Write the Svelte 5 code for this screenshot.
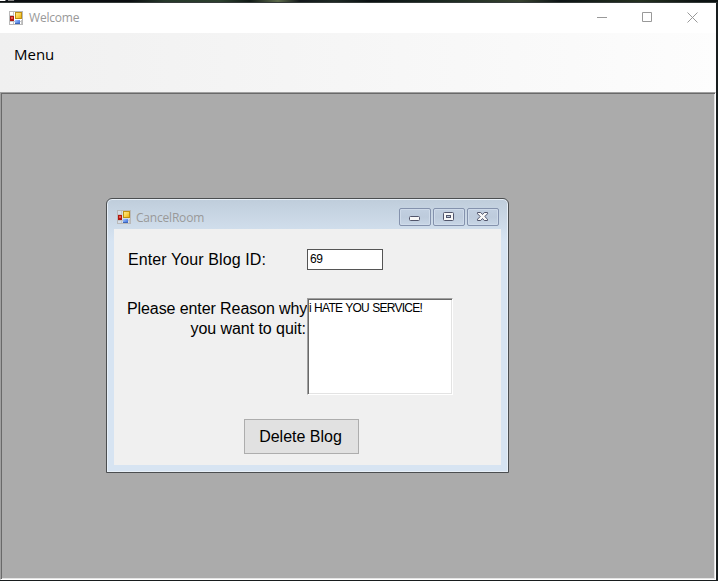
<script>
  let blogId = $state('69');
  let reason = $state('i HATE YOU SERVICE!');
</script>

{#snippet formIcon(framed)}
  <svg class="form-icon" width="14" height="14" viewBox="0 0 14 14" shape-rendering="crispEdges">
    <defs>
      <linearGradient id="gold" x1="0" y1="0" x2="1" y2="1">
        <stop offset="0" stop-color="#fff0a0" /><stop offset=".5" stop-color="#fbd34c" /><stop offset="1" stop-color="#e2a800" />
      </linearGradient>
      <linearGradient id="blue" x1="0" y1="0" x2="1" y2="1">
        <stop offset="0" stop-color="#a6c8ff" /><stop offset="1" stop-color="#2d62d8" />
      </linearGradient>
    </defs>
    <rect x=".5" y=".5" width="13" height="13" fill={framed ? '#fff' : '#d5dde8'} stroke="#b9b9b9" />
    <path d="M4.5 1v12M1 4.500h4M1 10.500h12M12.500 9v4" stroke="#c4c4c4" fill="none" />
    <rect x="6" y="1" width="7" height="7" fill="url(#gold)" />
    <rect x="6.500" y="1.500" width="6" height="6" fill="none" stroke="#c08f10" />
    <rect x="1" y="5" width="4" height="5" fill="#b01510" />
    <rect x="2" y="6" width="2" height="2" fill="#e85a4c" />
    <rect x="6" y="9" width="5" height="4" fill="url(#blue)" />
    <path d="M6 12.500h5" stroke="#3c66b8" />
  </svg>
{/snippet}

<div class="desktop">
  <main class="window">
    <header class="titlebar">
      {@render formIcon(true)}
      <span class="caption">Welcome</span>
      <div class="controls">
        <svg width="11" height="11" viewBox="0 0 11 11"><path d="M0 5.500h10" /></svg>
        <svg width="11" height="11" viewBox="0 0 11 11"><path d="M.5 .5h9v9h-9z" /></svg>
        <svg width="11" height="11" viewBox="0 0 11 11"><path d="M.5 .5l10 10M10.500 .5l-10 10" /></svg>
      </div>
    </header>
    <nav><span>Menu</span></nav>
    <section class="mdi">
      <div class="dialog">
        <header class="dialog-title">
          {@render formIcon(false)}
          <span class="caption">CancelRoom</span>
          <div class="dialog-controls">
            <span class="cbtn"><svg width="14" height="12" viewBox="0 0 14 12"><rect x="1.500" y="5.500" width="10" height="4" rx="1" fill="#f7f7f7" stroke="#51556b" /></svg></span>
            <span class="cbtn"><svg width="14" height="12" viewBox="0 0 14 12"><rect x="1.500" y="1.500" width="10" height="8" rx="1" fill="#f7f7f7" stroke="#51556b" /><rect x="4.500" y="4.500" width="4" height="2" fill="#b9c6d8" stroke="#51556b" /></svg></span>
            <span class="cbtn"><svg width="14" height="12" viewBox="0 0 14 12"><path d="M1.500 1.500h3.200l1.800 2 1.800-2h3.200v1.300l-2.700 2.700 2.700 2.700v1.300h-3.200l-1.800-2-1.800 2h-3.200v-1.300l2.700-2.700-2.700-2.700z" fill="#f7f7f7" stroke="#51556b" /></svg></span>
          </div>
        </header>
        <form onsubmit={(e) => e.preventDefault()}>
          <div class="row id-row">
            <label for="blog-id"><span class="l1">Enter Your Blog ID:</span></label>
            <input id="blog-id" bind:value={blogId} />
          </div>
          <div class="row reason-row">
            <label for="reason"><span class="l2">Please enter Reason why</span><br /><span class="l3">you want to quit:</span></label>
            <textarea id="reason" spellcheck="false" bind:value={reason}></textarea>
          </div>
          <button type="submit"><span>Delete Blog</span></button>
        </form>
      </div>
    </section>
  </main>
</div>

<style>
  :global(body) { overflow: hidden; }
  * { box-sizing: border-box; }
  .desktop {
    width: 718px;
    height: 581px;
    padding: 3px 2px 1px 0;
    background:
      linear-gradient(90deg, #fff 0 5px, #777 5px 6px, #10151c 6px 8px, #888 8px 14px, #10151c 14px) 0 0 / 15px 1px no-repeat,
      linear-gradient(#343a39, #343a39) 0 2px / 717px 1px no-repeat,
      linear-gradient(90deg, #0a0e10 0, #0a0e10 130px, #26382a 165px, #2c3f2e 220px, #101916 250px, #5d6b4b 278px, #12171a 300px, #1d2823 335px, #0a1012 370px, #1a2820 440px, #36412f 520px, #0d1415 560px, #24301f 640px, #0c1212 700px) 0 0 / 718px 2px no-repeat,
      #181d1e;
  }
  .window { height: 577px; display: flex; flex-direction: column; background: #fff; }
  .titlebar { height: 30px; display: flex; align-items: center; padding: 0 17px 1px 9px; }
  .form-icon { display: block; flex: none; }
  .caption { font: 12px/16px "Open Sans", sans-serif; letter-spacing: -.2px; color: #999; white-space: nowrap; }
  .titlebar .caption { margin: 1px 0 0 6px; }
  .controls { margin-left: auto; display: flex; gap: 34px; padding-right: 1px; }
  .controls svg { display: block; fill: none; stroke: #999; }
  nav {
    height: 59px;
    padding: 10px 14px;
    font: 15px/22px "Open Sans", sans-serif;
    color: #000;
    background: linear-gradient(90deg, #f0f0f0, #fafafa 80%, #fdfdfd);
  }
  .mdi {
    position: relative;
    flex: 1;
    background: #ababab;
    border: 1px solid;
    border-color: #a0a0a0 #fff #fff #a0a0a0;
    box-shadow: inset 1px 1px #696969, inset -1px -1px #e3e3e3;
  }
  .dialog {
    position: absolute;
    left: 105px;
    top: 105px;
    width: 403px;
    height: 275px;
    padding: 0 7px 7px;
    border: 1px solid #4b4e50;
    border-radius: 6px 6px 0 0;
    background: linear-gradient(#bfcddb, #d7e4f2 42px);
    box-shadow: inset 0 0 0 1px #e8f0f8;
  }
  .dialog-title { height: 30px; display: flex; padding: 11px 2px 0 3px; }
  .dialog-title .caption { margin: 0 0 0 5px; }
  .dialog-controls { margin: -2px 0 0 auto; display: flex; gap: 2px; }
  .cbtn {
    width: 32px;
    height: 18px;
    display: flex;
    align-items: center;
    justify-content: center;
    border: 1px solid #8492ad;
    border-radius: 2px;
    background: linear-gradient(#c2d0e1, #bdcbdc 50%, #c8d6e6);
    box-shadow: inset 0 0 0 1px #cfdbea;
  }
  form {
    height: 236px;
    background: #f0f0f0;
    padding: 20px 0 0 13px;
    display: flex;
    flex-direction: column;
    font-family: "Liberation Sans", Arial, sans-serif;
  }
  .row { display: flex; align-items: flex-start; }
  .id-row { height: 49px; }
  label { width: 180px; flex: none; padding-top: 1px; font-size: 16px; line-height: 20px; color: #000; white-space: nowrap; }
  .id-row label { padding-left: 1px; }
  .l1 { letter-spacing: .1px; }
  .l2 { letter-spacing: -.09px; }
  .l3 { letter-spacing: -.06px; }
  .reason-row label { text-align: right; padding-right: 1px; }
  .reason-row { height: 121px; }
  input, textarea {
    margin: 0;
    outline: none;
    border-radius: 0;
    background: #fff;
    color: #000;
    font: 12px/15px "Liberation Sans", Arial, sans-serif;
  }
  input { width: 76px; height: 21px; padding: 0 2px 1px; border: 1px solid #555; letter-spacing: -.5px; }
  textarea {
    width: 146px;
    height: 97px;
    padding: 2px 1px;
    resize: none;
    border: 1px solid;
    border-color: #a0a0a0 #fff #fff #a0a0a0;
    box-shadow: inset 1px 1px #696969, inset -1px -1px #e3e3e3;
    letter-spacing: -.72px;
    word-spacing: .5px;
    overflow: hidden;
  }
  button {
    width: 115px;
    height: 35px;
    margin-left: 117px;
    padding: 1px 2px 0 0;
    border: 1px solid #adadad;
    background: #e1e1e1;
    color: #000;
    font: 16px/20px "Liberation Sans", Arial, sans-serif;
  }
</style>
